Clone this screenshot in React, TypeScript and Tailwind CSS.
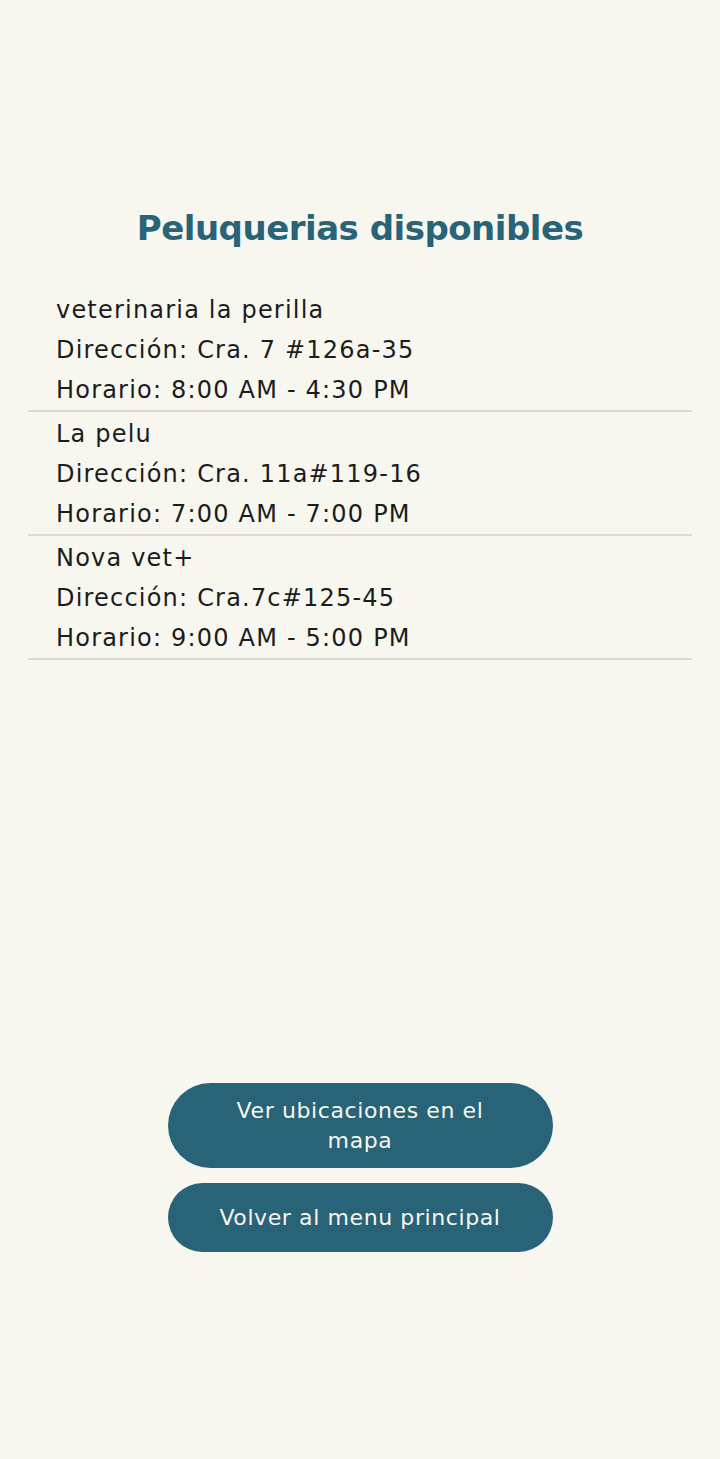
import React from 'react';

interface Peluqueria {
  nombre: string;
  direccion: string;
  horario: string;
}

const peluquerias: Peluqueria[] = [
  { nombre: 'veterinaria la perilla', direccion: 'Cra. 7 #126a-35', horario: '8:00 AM - 4:30 PM' },
  { nombre: 'La pelu', direccion: 'Cra. 11a#119-16', horario: '7:00 AM - 7:00 PM' },
  { nombre: 'Nova vet+', direccion: 'Cra.7c#125-45', horario: '9:00 AM - 5:00 PM' },
];

export default function App() {
  return (
    <div className="min-h-[1459px] w-[720px] bg-[#f7f6ef] flex flex-col font-['DejaVu_Sans',sans-serif]">
      {/* Title */}
      <h1 className="mt-[204px] text-center text-[34px] font-bold text-[#286377] tracking-[-0.5px] leading-[48px]">
        Peluquerias disponibles
      </h1>

      {/* List */}
      <div className="mt-[36px] mx-[28px] flex flex-col">
        {peluquerias.map((p) => (
          <div key={p.nombre} className="border-b-2 border-[#dcdcd4]">
            <div className="pl-[28px] pt-[2px] text-[24px] tracking-[1.2px] leading-[40px] text-[#1c1c1c]">
              <div>{p.nombre}</div>
              <div>Dirección: {p.direccion}</div>
              <div>Horario: {p.horario}</div>
            </div>
          </div>
        ))}
      </div>

      {/* Actions */}
      <div className="mt-[423px] flex flex-col items-center gap-[15px]">
        <button className="w-[385px] h-[85px] rounded-full bg-[#286377] text-[#f7f6ef] text-[22px] tracking-[0.6px] leading-[30px] px-[56px]">
          Ver ubicaciones en el mapa
        </button>
        <button className="w-[385px] h-[69px] rounded-full bg-[#286377] text-[#f7f6ef] text-[22px] tracking-[0.6px] leading-[30px]">
          Volver al menu principal
        </button>
      </div>
    </div>
  );
}
